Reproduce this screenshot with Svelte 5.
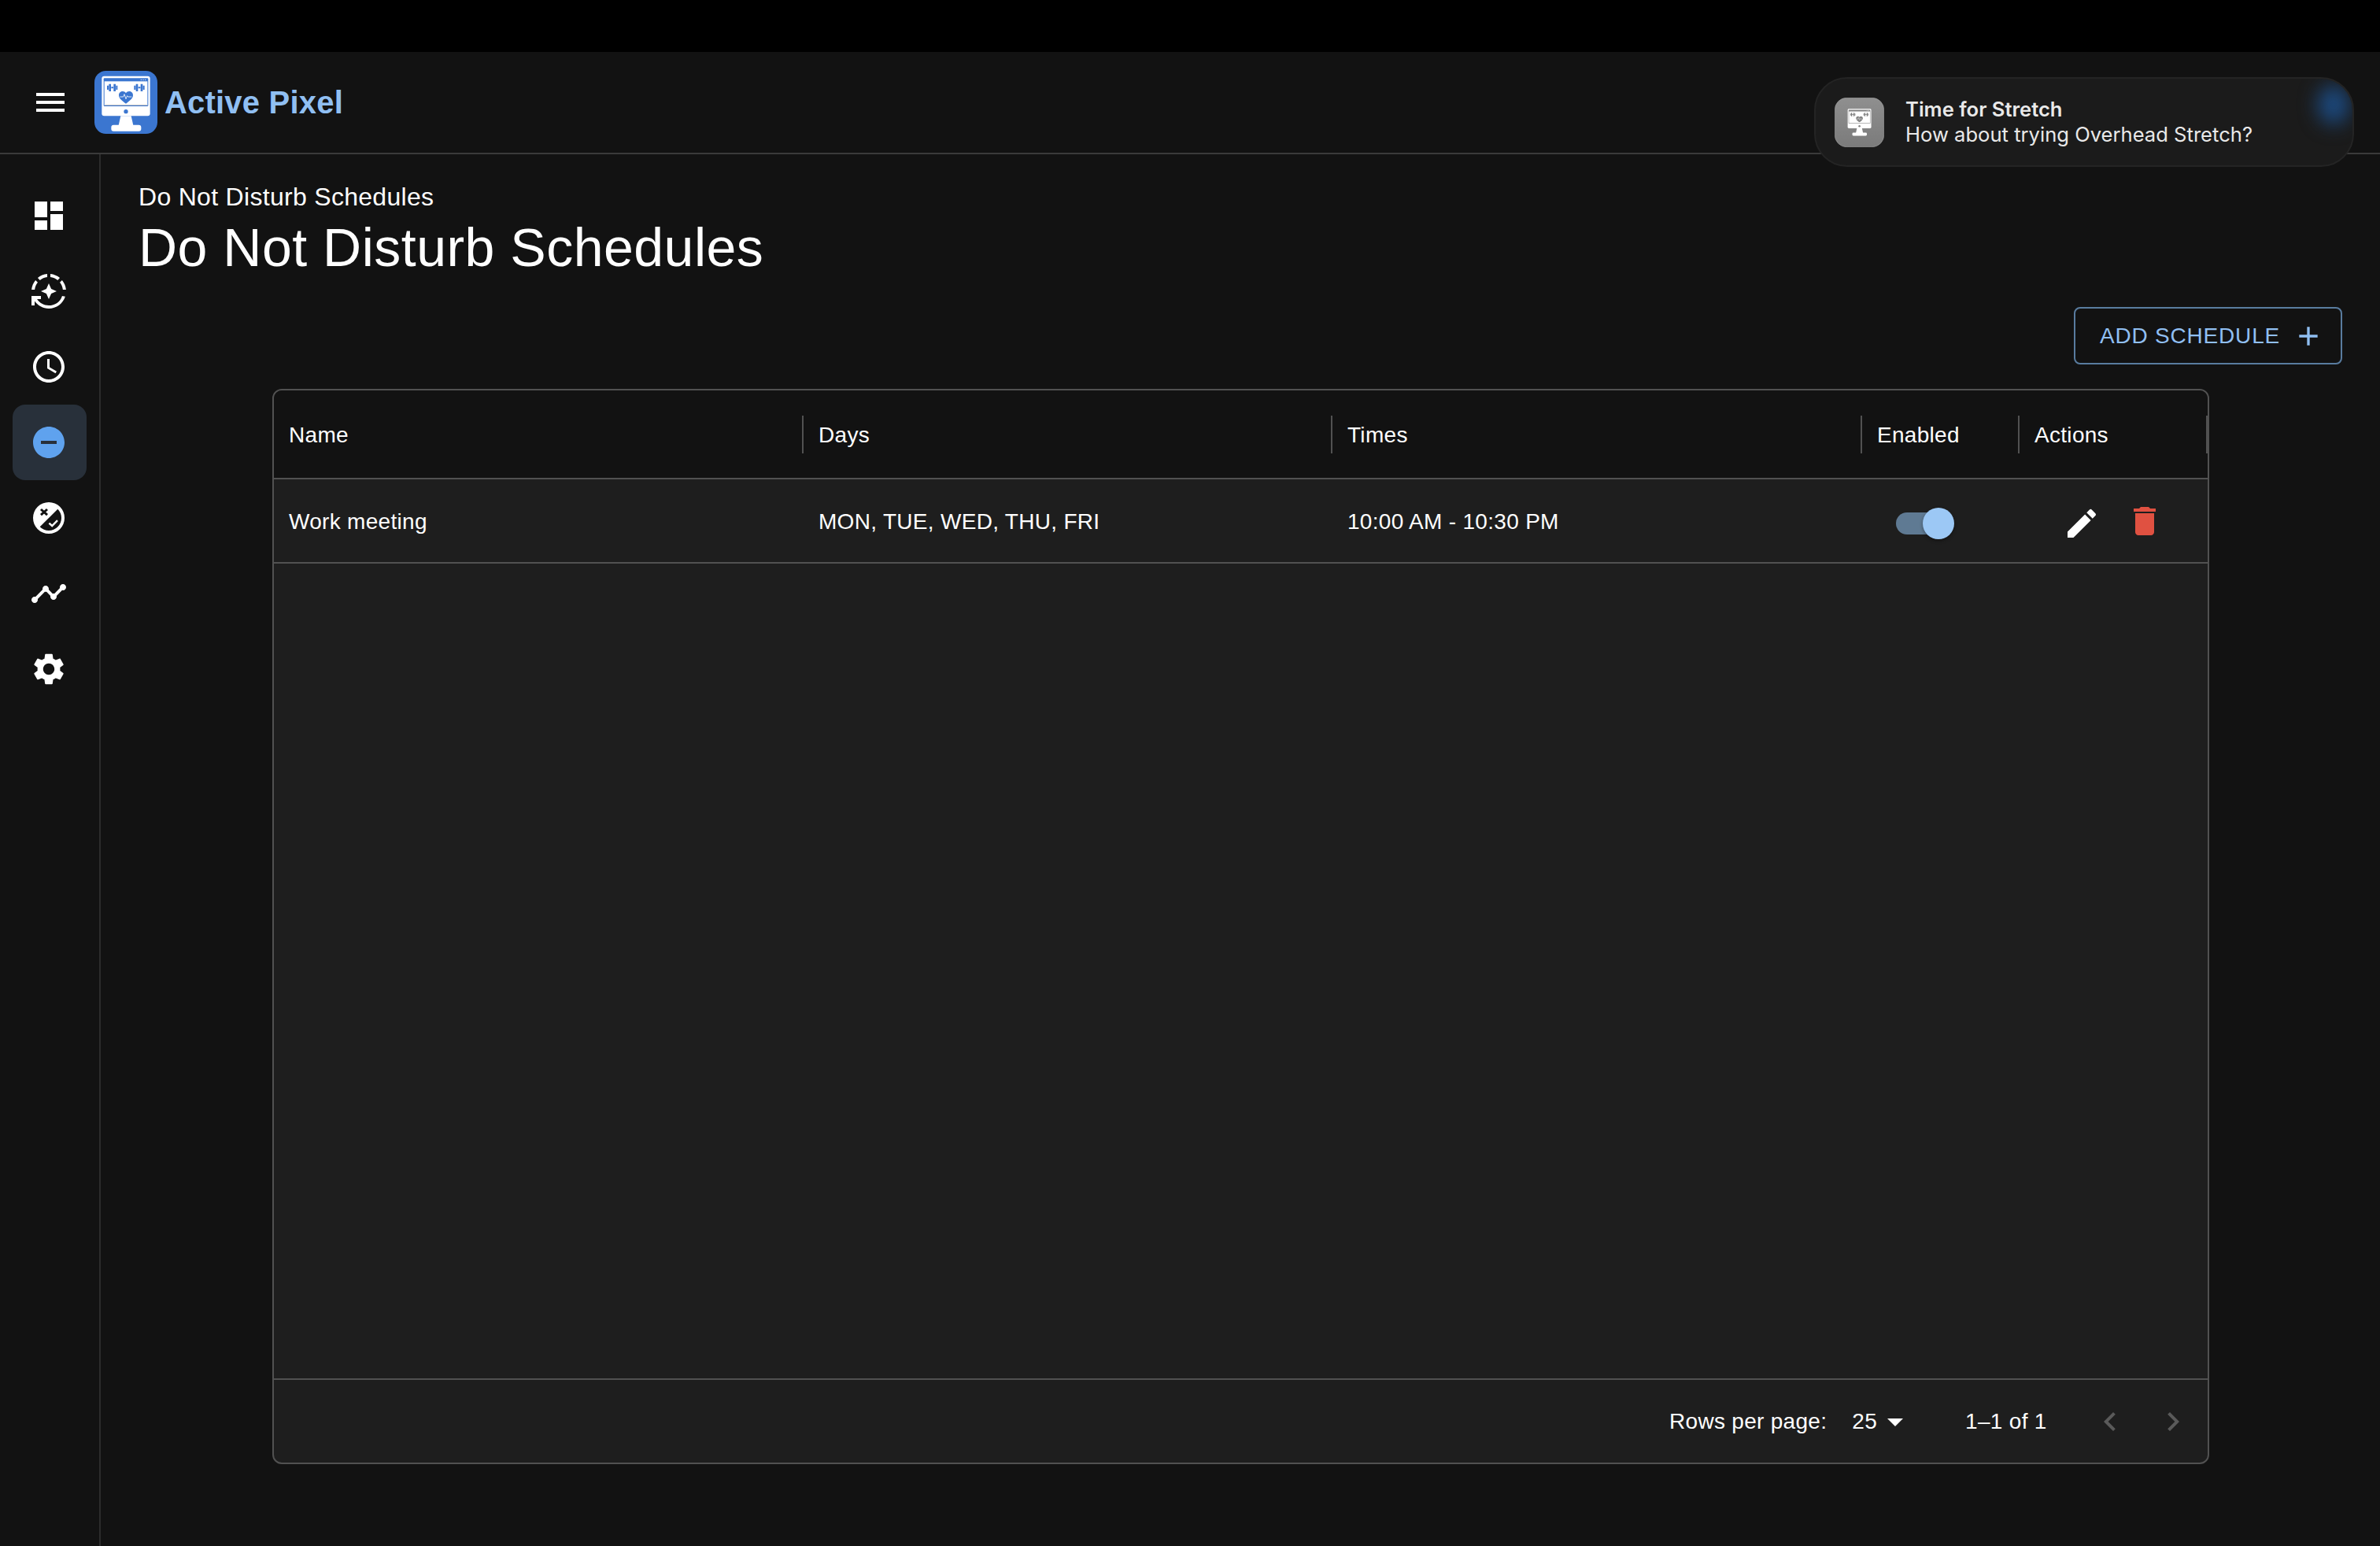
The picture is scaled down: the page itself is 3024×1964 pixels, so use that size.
<script lang="ts">
  const icons = {
    dashboard: "M3 13h8V3H3v10zm0 8h8v-6H3v6zm10 0h8V11h-8v10zm0-18v6h8V3h-8z",
    auto: "M19.03 3.56c-1.67-1.39-3.74-2.3-6.03-2.51v2.01c1.73.19 3.31.88 4.61 1.92l1.42-1.42zM11 3.06V1.05c-2.29.2-4.36 1.12-6.03 2.51l1.42 1.42C7.69 3.94 9.27 3.25 11 3.06zM4.98 6.39 3.56 4.97C2.17 6.64 1.26 8.71 1.05 11h2.01c.19-1.73.88-3.31 1.92-4.61zM20.94 11h2.01c-.21-2.29-1.12-4.36-2.51-6.03l-1.42 1.42c1.04 1.3 1.73 2.88 1.92 4.61zM7 12l3.44 1.56L12 17l1.56-3.44L17 12l-3.44-1.56L12 7l-1.56 3.44zM12 21c-3.11 0-5.85-1.59-7.46-4H7v-2H1v6h2v-2.7c1.99 2.84 5.27 4.7 9 4.7 4.87 0 9-3.17 10.44-7.59l-1.96-.45C19.25 18.9 15.92 21 12 21z",
    clock: "M11.99 2C6.47 2 2 6.48 2 12s4.47 10 9.99 10C17.52 22 22 17.52 22 12S17.52 2 11.99 2zM12 20c-4.42 0-8-3.58-8-8s3.58-8 8-8 8 3.58 8 8-3.58 8-8 8zM12.5 7H11v6l5.25 3.15.75-1.23-4.5-2.67z",
    dnd: "M12 2C6.48 2 2 6.48 2 12s4.48 10 10 10 10-4.48 10-10S17.52 2 12 2zm5 11H7v-2h10v2z",
    split: "M12 2a10 10 0 1 0 0 20 10 10 0 0 0 0-20zM17.66 6.34A8 8 0 0 1 6.34 17.66z",
    timeline: "M23 8c0 1.1-.9 2-2 2-.18 0-.35-.02-.51-.07l-3.56 3.55c.05.16.07.34.07.52 0 1.1-.9 2-2 2s-2-.9-2-2c0-.18.02-.36.07-.52l-2.55-2.55c-.16.05-.34.07-.52.07s-.36-.02-.52-.07l-4.55 4.56c.05.16.07.33.07.51 0 1.1-.9 2-2 2s-2-.9-2-2 .9-2 2-2c.18 0 .35.02.51.07l4.56-4.55C8.02 9.36 8 9.18 8 9c0-1.1.9-2 2-2s2 .9 2 2c0 .18-.02.36-.07.52l2.55 2.55c.16-.05.34-.07.52-.07s.36.02.52.07l3.55-3.56C19.02 8.35 19 8.18 19 8c0-1.1.9-2 2-2s2 .9 2 2z",
    settings: "M19.14 12.94c.04-.3.06-.61.06-.94 0-.32-.02-.64-.07-.94l2.03-1.58c.18-.14.23-.41.12-.61l-1.92-3.32c-.12-.22-.37-.29-.59-.22l-2.39.96c-.5-.38-1.03-.7-1.62-.94l-.36-2.54c-.04-.24-.24-.41-.48-.41h-3.84c-.24 0-.43.17-.47.41l-.36 2.54c-.59.24-1.13.57-1.62.94l-2.39-.96c-.22-.08-.47 0-.59.22L2.74 8.87c-.12.21-.08.47.12.61l2.03 1.58c-.05.3-.09.63-.09.94s.02.64.07.94l-2.03 1.58c-.18.14-.23.41-.12.61l1.92 3.32c.12.22.37.29.59.22l2.39-.96c.5.38 1.03.7 1.62.94l.36 2.54c.05.24.24.41.48.41h3.84c.24 0 .44-.17.47-.41l.36-2.54c.59-.24 1.13-.56 1.62-.94l2.39.96c.22.08.47 0 .59-.22l1.92-3.32c.12-.22.07-.47-.12-.61l-2.01-1.58zM12 15.6c-1.98 0-3.6-1.62-3.6-3.6s1.62-3.6 3.6-3.6 3.6 1.62 3.6 3.6-1.62 3.6-3.6 3.6z",
    menu: "M3 18h18v-2H3v2zm0-5h18v-2H3v2zm0-7v2h18V6H3z",
    plus: "M19 13h-6v6h-2v-6H5v-2h6V5h2v6h6v2z",
    edit: "M3 17.25V21h3.75L17.81 9.94l-3.75-3.75L3 17.25zM20.71 7.04c.39-.39.39-1.02 0-1.41l-2.34-2.34a.9959.9959 0 0 0-1.41 0l-1.83 1.83 3.75 3.75 1.83-1.83z",
    trash: "M6 19c0 1.1.9 2 2 2h8c1.1 0 2-.9 2-2V7H6v12zM19 4h-3.5l-1-1h-5l-1 1H5v2h14V4z",
    caret: "M7 10l5 5 5-5z",
    prev: "M15.41 7.41 14 6l-6 6 6 6 1.41-1.41L10.83 12z",
    next: "M10 6 8.59 7.41 13.17 12l-4.58 4.59L10 18l6-6z",
  };

  const nav = ["dashboard", "auto", "clock", "dnd", "split", "timeline", "settings"] as const;
  const columns = ["Name", "Days", "Times", "Enabled", "Actions"];
  // plate, plate, bar, plate, plate
  const dumbbell = "M0 6h6v16H0zM7 0h8v28H7zM16 11h8v6h-8zM25 0h8v28h-8zM34 6h6v16h-6z";
</script>

{#snippet monitor(accent: string, shade: string)}
  <rect x="28" y="20" width="184" height="152" rx="9" fill="#fff" />
  <path d="M100 172h40l8 36H92z" fill="#fff" />
  <rect x="64" y="206" width="114" height="24" rx="9" fill="#fff" />
  <rect x="35" y="28" width="170" height="107" rx="3" fill={accent} />
  <rect x="38" y="40" width="164" height="92" fill="#fff" />
  <rect x="38" y="129" width="164" height="3" fill={shade} />
  <circle cx="120" cy="155" r="8" fill={accent} />
  <g fill="#fff">
    <circle cx="178" cy="34" r="2" /><circle cx="186" cy="34" r="2" /><circle cx="194" cy="34" r="2" />
  </g>
  <g fill={accent}>
    <path d={dumbbell} transform="translate(48 50)" />
    <path d={dumbbell} transform="translate(151 50)" />
    <path d="M120 125c-10-8-27-18-27-32 0-16 20-20 27-8 7-12 27-8 27 8 0 14-17 24-27 32z" />
  </g>
  <path d="M97 99h13l4-10 6 18 5-12 3 4h14" fill="none" stroke="#fff" stroke-width="2.5" />
{/snippet}

{#snippet icon(d: string, size: number)}
  <svg viewBox="0 0 24 24" width={size} height={size} fill="currentColor"><path {d} fill-rule="evenodd" /></svg>
{/snippet}

<div class="app">
  <div class="sysbar"></div>

  <header class="topbar">
    <button class="menu" aria-label="Menu">{@render icon(icons.menu, 48)}</button>
    <svg class="logo" viewBox="0 0 240 240" width="80" height="80">
      <rect width="240" height="240" rx="44" fill="#3b76d0" />
      {@render monitor("#3b76d0", "#b9bcc2")}
    </svg>
    <span class="brand">Active Pixel</span>

    <aside class="toast">
      <span class="glow"></span>
      <svg class="toast-icon" viewBox="0 0 240 240" width="63" height="63">
        <defs>
          <linearGradient id="tile" x1="0" y1="0" x2="0" y2="1">
            <stop offset="0" stop-color="#8f8f8f" />
            <stop offset="1" stop-color="#7b7b7b" />
          </linearGradient>
        </defs>
        <rect x="1" y="1" width="238" height="238" rx="58" fill="url(#tile)" stroke="#a9a9a9" stroke-width="2" />
        <g transform="translate(46 42) scale(0.62)">
          {@render monitor("#828282", "#b0b0b0")}
        </g>
      </svg>
      <div class="toast-text">
        <strong>Time for Stretch</strong>
        <span>How about trying Overhead Stretch?</span>
      </div>
    </aside>
  </header>

  <div class="body">
    <nav class="sidebar">
      {#each nav as name}
        <a class="nav-item" class:active={name === "dnd"} href="#{name}" aria-label={name}>
          <svg viewBox="0 0 24 24" width="48" height="48" fill="currentColor">
            <path d={icons[name]} fill-rule="evenodd" />
            {#if name === "split"}
              <path d="M7 6.5l4 3.6M11 6.5l-4 3.6" stroke="#121212" stroke-width="1.5" fill="none" />
              <path d="M12.2 15.3l1.9 1.7 3.4-3.4" stroke="currentColor" stroke-width="1.2" fill="none" />
            {/if}
          </svg>
        </a>
      {/each}
    </nav>

    <main class="content">
      <div class="crumb">Do Not Disturb Schedules</div>
      <h1>Do Not Disturb Schedules</h1>

      <div class="toolbar">
        <button class="add">
          ADD SCHEDULE
          {@render icon(icons.plus, 40)}
        </button>
      </div>

      <section class="grid">
        <div class="row head">
          {#each columns as col}
            <div class="cell">{col}</div>
          {/each}
        </div>
        <div class="row data">
          <div class="cell">Work meeting</div>
          <div class="cell">MON, TUE, WED, THU, FRI</div>
          <div class="cell">10:00 AM - 10:30 PM</div>
          <div class="cell">
            <span class="switch"><span class="thumb"></span></span>
          </div>
          <div class="cell actions">
            <span class="edit">{@render icon(icons.edit, 48)}</span>
            <span class="trash">{@render icon(icons.trash, 48)}</span>
          </div>
        </div>
        <div class="filler"></div>
        <footer class="pager">
          <span class="rows-label">Rows per page:</span>
          <span class="rows-value">25</span>
          <span class="caret">{@render icon(icons.caret, 48)}</span>
          <span class="range">1–1 of 1</span>
          <span class="chev">{@render icon(icons.prev, 48)}</span>
          <span class="chev next">{@render icon(icons.next, 48)}</span>
        </footer>
      </section>
    </main>
  </div>
</div>

<style>
  :global(body) {
    background: #121212;
  }

  .app {
    display: flex;
    flex-direction: column;
    min-height: 1964px;
    background: #121212;
    color: #fff;
    font-family: "Liberation Sans", Arial, sans-serif;
  }

  .sysbar {
    height: 66px;
    background: #000;
  }

  .topbar {
    position: relative;
    display: flex;
    align-items: center;
    height: 128px;
    padding-left: 40px;
    border-bottom: 2px solid #3a3a3a;
  }

  .menu {
    display: flex;
    width: 48px;
    height: 48px;
    padding: 0;
    border: none;
    background: none;
    color: #fff;
  }

  .logo {
    margin-left: 32px;
  }

  .brand {
    margin-left: 9px;
    font-size: 40px;
    font-weight: 700;
    letter-spacing: 0.2px;
    color: #90bff2;
  }

  /* macOS notification banner, floats over the header */
  .toast {
    position: absolute;
    top: 32px;
    right: 33px;
    display: flex;
    align-items: center;
    gap: 27px;
    box-sizing: border-box;
    width: 686px;
    height: 114px;
    padding-left: 24px;
    overflow: hidden;
    border: 2px solid #242424;
    border-radius: 42px;
    background: #1b1b1b;
    font-family: Inter, "Noto Sans", sans-serif;
    font-size: 25.6px;
    color: #e9e9e9;
  }

  .glow {
    position: absolute;
    top: 8px;
    right: 4px;
    width: 40px;
    height: 50px;
    border-radius: 50%;
    background: #1c4a80;
    filter: blur(12px);
  }

  .toast-text {
    display: flex;
    flex-direction: column;
    gap: 1px;
    line-height: 31px;
    white-space: nowrap;
    transform: translateY(-1px);
  }

  .toast-text strong {
    font-weight: 600;
  }

  .body {
    display: flex;
    flex: 1;
  }

  .sidebar {
    display: flex;
    flex-direction: column;
    flex: none;
    box-sizing: border-box;
    width: 128px;
    padding: 30px 16px 0;
    border-right: 2px solid #2c2c2c;
  }

  .nav-item {
    display: flex;
    align-items: center;
    justify-content: center;
    width: 94px;
    height: 96px;
    border-radius: 16px;
    color: #fff;
  }

  .nav-item svg {
    margin-right: 2px;
  }

  .nav-item.active {
    background: #28303a;
    color: #5fa2ee;
  }

  .content {
    flex: 1;
    min-width: 0;
    padding: 34px 48px 0;
  }

  .crumb {
    font-size: 32px;
    line-height: 40px;
    letter-spacing: 0.3px;
  }

  h1 {
    margin: 2px 0 0;
    font-size: 68px;
    font-weight: 400;
    line-height: 84px;
    letter-spacing: 0.5px;
  }

  .toolbar {
    display: flex;
    justify-content: flex-end;
    margin-top: 34px;
  }

  .add {
    display: flex;
    align-items: center;
    gap: 16px;
    box-sizing: border-box;
    width: 341px;
    height: 73px;
    padding: 0 0 0 31px;
    border: 2px solid #597c9f;
    border-radius: 8px;
    background: none;
    color: #90bff2;
    font: inherit;
    font-size: 28px;
    letter-spacing: 0.8px;
    white-space: nowrap;
  }

  .grid {
    display: flex;
    flex-direction: column;
    box-sizing: border-box;
    height: 1366px;
    margin: 31px 169px 0 170px;
    overflow: hidden;
    border: 2px solid #515151;
    border-radius: 12px;
    background: #1e1e1e;
    font-size: 28px;
    letter-spacing: 0.3px;
  }

  .row {
    display: grid;
    flex: none;
    grid-template-columns: 673px 672px 673px 200px 239px;
    border-bottom: 2px solid #515151;
  }

  .head {
    height: 111px;
    background: #121212;
  }

  .data {
    height: 105px;
  }

  .cell {
    position: relative;
    display: flex;
    align-items: center;
    padding: 2px 0 0 19px;
  }

  .head .cell::after {
    content: "";
    position: absolute;
    top: 32px;
    right: 0;
    width: 2px;
    height: 48px;
    background: #515151;
  }

  .switch {
    position: relative;
    display: block;
    width: 68px;
    height: 28px;
    margin: 5px 0 0 24px;
    border-radius: 14px;
    background: #5f7a93;
  }

  .thumb {
    position: absolute;
    top: -6px;
    right: -6px;
    width: 40px;
    height: 40px;
    border-radius: 50%;
    background: #9cc8f5;
    box-shadow: 0 2px 4px rgba(0, 0, 0, 0.35);
  }

  .actions {
    gap: 32px;
    padding-left: 55px;
  }

  .edit,
  .trash {
    display: flex;
  }

  .edit {
    margin-top: 5px;
    color: #fff;
  }

  .trash {
    margin-top: -1px;
    color: #e05141;
  }

  .filler {
    flex: 1;
  }

  .pager {
    display: flex;
    flex: none;
    align-items: center;
    height: 105px;
    padding-left: 1773px;
    border-top: 2px solid #515151;
    white-space: nowrap;
  }

  .pager span {
    display: flex;
  }

  .rows-value {
    margin-left: 32px;
  }

  .caret {
    margin-left: -1px;
  }

  .range {
    margin-left: 65px;
  }

  .chev {
    margin-left: 56px;
    color: #5a5a5a;
  }

  .chev.next {
    margin-left: 32px;
  }
</style>
